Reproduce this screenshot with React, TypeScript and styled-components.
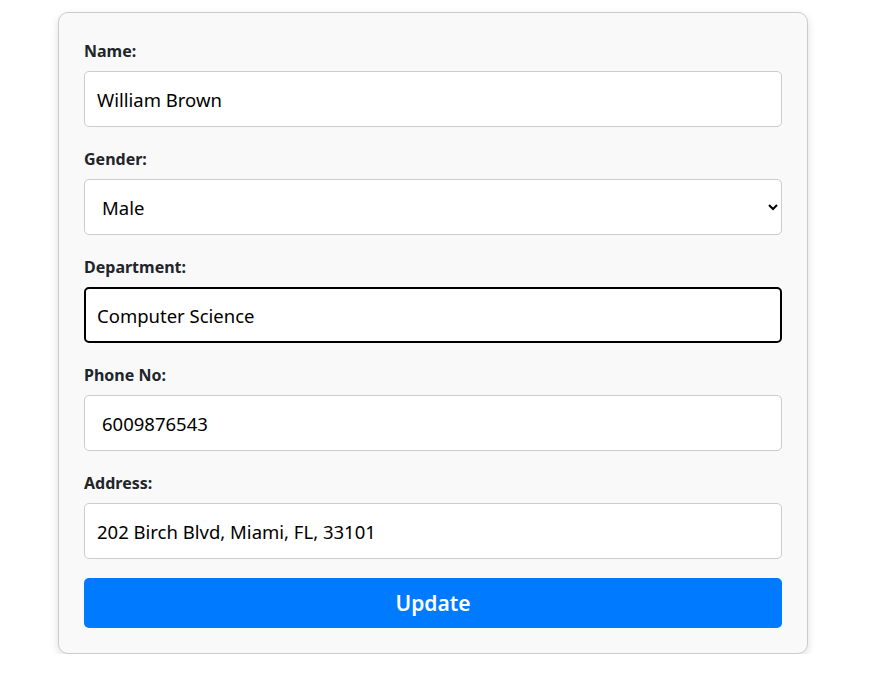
import styled, { createGlobalStyle } from "styled-components";
import { useState } from "react";

const GlobalStyle = createGlobalStyle`
  body {
    margin: 0;
    background: #ffffff;
    font-family: "Noto Sans", "Open Sans", sans-serif;
  }
`;

const Card = styled.form`
  box-sizing: border-box;
  width: 750px;
  margin: 12px 0 0 58px;
  padding: 26px 25px 25px;
  background-color: #f9f9f9;
  border: 1px solid #cccccc;
  border-radius: 10px;
  box-shadow: 0 3px 8px rgba(0, 0, 0, 0.13);
  display: flex;
  flex-direction: column;
`;

const Field = styled.div`
  display: flex;
  flex-direction: column;
  margin-bottom: 20px;
`;

const Label = styled.label`
  font-size: 16px;
  font-weight: 700;
  line-height: 24px;
  color: #212529;
  margin-bottom: 8px;
`;

const TextInput = styled.input<{ $focused?: boolean; $inset?: number }>`
  box-sizing: border-box;
  width: 100%;
  height: 56px;
  padding: 0 12px;
  padding-left: ${(p) => (p.$focused ? 11 : 12) + (p.$inset ?? 0)}px;
  font-family: inherit;
  font-size: 18.5px;
  color: #000000;
  background: #ffffff;
  border: ${(p) => (p.$focused ? "2px solid #000000" : "1px solid #cccccc")};
  border-radius: 5px;
  outline: none;
`;

const Select = styled.select`
  box-sizing: border-box;
  width: 100%;
  height: 56px;
  padding: 0 10px 0 13px;
  font-family: inherit;
  font-size: 18.5px;
  color: #000000;
  background: #ffffff;
  border: 1px solid #cccccc;
  border-radius: 5px;
  outline: none;
`;

const SubmitButton = styled.button`
  height: 50px;
  width: 100%;
  margin-top: -1px;
  border: none;
  border-radius: 5px;
  background-color: #007bff;
  color: #ffffff;
  font-family: inherit;
  font-size: 21px;
  font-weight: 600;
  cursor: pointer;
`;

export default function App() {
  const [name, setName] = useState("William Brown");
  const [gender, setGender] = useState("Male");
  const [department, setDepartment] = useState("Computer Science");
  const [phone, setPhone] = useState("6009876543");
  const [address, setAddress] = useState("202 Birch Blvd, Miami, FL, 33101");

  return (
    <>
      <GlobalStyle />
      <Card onSubmit={(e) => e.preventDefault()}>
        <Field>
          <Label>Name:</Label>
          <TextInput value={name} onChange={(e) => setName(e.target.value)} />
        </Field>
        <Field>
          <Label>Gender:</Label>
          <Select value={gender} onChange={(e) => setGender(e.target.value)}>
            <option>Male</option>
            <option>Female</option>
            <option>Other</option>
          </Select>
        </Field>
        <Field>
          <Label>Department:</Label>
          <TextInput $focused value={department} onChange={(e) => setDepartment(e.target.value)} />
        </Field>
        <Field>
          <Label>Phone No:</Label>
          <TextInput $inset={5} value={phone} onChange={(e) => setPhone(e.target.value)} />
        </Field>
        <Field>
          <Label>Address:</Label>
          <TextInput value={address} onChange={(e) => setAddress(e.target.value)} />
        </Field>
        <SubmitButton type="submit">Update</SubmitButton>
      </Card>
    </>
  );
}
